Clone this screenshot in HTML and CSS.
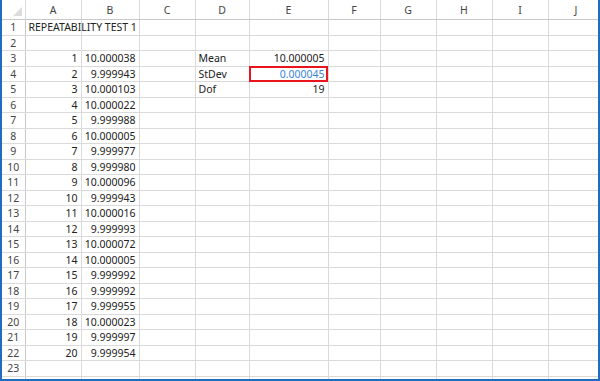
FILE: index.html
```html
<!DOCTYPE html>
<html lang="en">
<head>
  <meta charset="UTF-8" />
  <title>Repeatability Test 1</title>
  <link rel="stylesheet" href="styles.css">
</head>
<body>

<div class="sheet">
  <table class="grid">
    <colgroup>
      <col class="c-rh"><col class="c-a"><col class="c-b"><col class="c-c"><col class="c-d">
      <col class="c-e"><col class="c-f"><col class="c-g"><col class="c-h"><col class="c-i"><col class="c-j">
    </colgroup>
    <thead>
      <tr class="head">
        <th class="corner"><span class="tri"></span></th>
        <th>A</th><th>B</th><th>C</th><th>D</th><th>E</th><th>F</th><th>G</th><th>H</th><th>I</th><th>J</th>
      </tr>
    </thead>
    <tbody>
      <tr><th>1</th><td class="txt">REPEATABILITY TEST 1</td><td></td><td></td><td></td><td></td><td></td><td></td><td></td><td></td><td></td></tr>
      <tr><th>2</th><td></td><td></td><td></td><td></td><td></td><td></td><td></td><td></td><td></td><td></td></tr>
      <tr><th>3</th><td class="num">1</td><td class="num">10.000038</td><td></td><td class="txt">Mean</td><td class="num">10.000005</td><td></td><td></td><td></td><td></td><td></td></tr>
      <tr><th>4</th><td class="num">2</td><td class="num">9.999943</td><td></td><td class="txt">StDev</td><td class="num sel">0.000045</td><td></td><td></td><td></td><td></td><td></td></tr>
      <tr><th>5</th><td class="num">3</td><td class="num">10.000103</td><td></td><td class="txt">Dof</td><td class="num">19</td><td></td><td></td><td></td><td></td><td></td></tr>
      <tr><th>6</th><td class="num">4</td><td class="num">10.000022</td><td></td><td></td><td></td><td></td><td></td><td></td><td></td><td></td></tr>
      <tr><th>7</th><td class="num">5</td><td class="num">9.999988</td><td></td><td></td><td></td><td></td><td></td><td></td><td></td><td></td></tr>
      <tr><th>8</th><td class="num">6</td><td class="num">10.000005</td><td></td><td></td><td></td><td></td><td></td><td></td><td></td><td></td></tr>
      <tr><th>9</th><td class="num">7</td><td class="num">9.999977</td><td></td><td></td><td></td><td></td><td></td><td></td><td></td><td></td></tr>
      <tr><th>10</th><td class="num">8</td><td class="num">9.999980</td><td></td><td></td><td></td><td></td><td></td><td></td><td></td><td></td></tr>
      <tr><th>11</th><td class="num">9</td><td class="num">10.000096</td><td></td><td></td><td></td><td></td><td></td><td></td><td></td><td></td></tr>
      <tr><th>12</th><td class="num">10</td><td class="num">9.999943</td><td></td><td></td><td></td><td></td><td></td><td></td><td></td><td></td></tr>
      <tr><th>13</th><td class="num">11</td><td class="num">10.000016</td><td></td><td></td><td></td><td></td><td></td><td></td><td></td><td></td></tr>
      <tr><th>14</th><td class="num">12</td><td class="num">9.999993</td><td></td><td></td><td></td><td></td><td></td><td></td><td></td><td></td></tr>
      <tr><th>15</th><td class="num">13</td><td class="num">10.000072</td><td></td><td></td><td></td><td></td><td></td><td></td><td></td><td></td></tr>
      <tr><th>16</th><td class="num">14</td><td class="num">10.000005</td><td></td><td></td><td></td><td></td><td></td><td></td><td></td><td></td></tr>
      <tr><th>17</th><td class="num">15</td><td class="num">9.999992</td><td></td><td></td><td></td><td></td><td></td><td></td><td></td><td></td></tr>
      <tr><th>18</th><td class="num">16</td><td class="num">9.999992</td><td></td><td></td><td></td><td></td><td></td><td></td><td></td><td></td></tr>
      <tr><th>19</th><td class="num">17</td><td class="num">9.999955</td><td></td><td></td><td></td><td></td><td></td><td></td><td></td><td></td></tr>
      <tr><th>20</th><td class="num">18</td><td class="num">10.000023</td><td></td><td></td><td></td><td></td><td></td><td></td><td></td><td></td></tr>
      <tr><th>21</th><td class="num">19</td><td class="num">9.999997</td><td></td><td></td><td></td><td></td><td></td><td></td><td></td><td></td></tr>
      <tr><th>22</th><td class="num">20</td><td class="num">9.999954</td><td></td><td></td><td></td><td></td><td></td><td></td><td></td><td></td></tr>
      <tr><th>23</th><td></td><td></td><td></td><td></td><td></td><td></td><td></td><td></td><td></td><td></td></tr>
      <tr><th>24</th><td></td><td></td><td></td><td></td><td></td><td></td><td></td><td></td><td></td><td></td></tr>
    </tbody>
  </table>
</div>

</body>
</html>
```

FILE: styles.css
```css
html, body {
  margin: 0;
  padding: 0;
  background: #fff;
}
body {
  font-family: 'Noto Sans', 'Open Sans', sans-serif;
  font-size: 10.5px;
  color: #222;
}
.sheet {
  height: 379px;
  border: 2px solid #1f6cc0;
  border-top: none;
  overflow: hidden;
  background: #fff;
}
.grid {
  border-collapse: collapse;
  table-layout: fixed;
  width: 600px;
}
.c-rh { width: 23px; }
.c-a { width: 56px; }
.c-b { width: 58px; }
.c-c { width: 56px; }
.c-d { width: 54px; }
.c-e { width: 79px; }
.c-f { width: 52px; }
.c-g, .c-h, .c-i, .c-j { width: 56px; }

.grid tr {
  height: 15.5px;
}
.grid tr.head {
  height: 19.5px;
}
.grid td, .grid th {
  padding: 0 3px;
  border-right: 1px solid #dadada;
  border-bottom: 1px solid #dadada;
  white-space: nowrap;
  overflow: visible;
  line-height: 14px;
}
.grid th {
  font-weight: normal;
  color: #444;
  text-align: center;
  padding: 0;
}
.grid tbody th {
  border-right-color: #c8c8c8;
}
.grid thead th {
  border-bottom-color: #c8c8c8;
}
.corner {
  position: relative;
}
.tri {
  position: absolute;
  right: 3px;
  bottom: 3px;
  width: 0;
  height: 0;
  border-left: 9px solid transparent;
  border-bottom: 9px solid #dcdcdc;
}
.num {
  text-align: right;
}
.txt {
  text-align: left;
}
.sel {
  color: #3a86d6;
  outline: 2px solid #e8161c;
  outline-offset: -2px;
}
```
